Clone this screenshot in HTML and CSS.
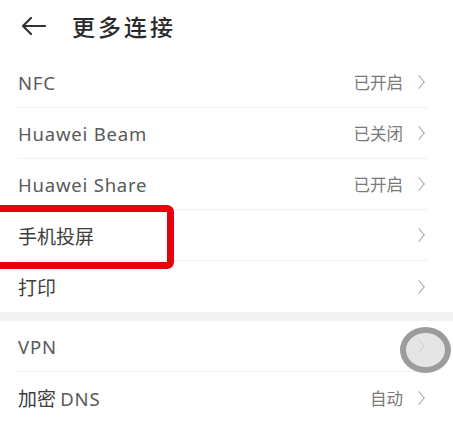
FILE: index.html
```html
<!DOCTYPE html>
<html lang="zh">
<head>
<meta charset="utf-8">
<link rel="stylesheet" href="styles.css">
</head>
<body>
<div class="page">
  <header class="header">
    <svg class="back" width="26" height="20" viewBox="0 0 26 20"><path d="M11 2 L3 10 L11 18 M3 10 H25" fill="none" stroke="#333" stroke-width="2.2" stroke-linecap="round" stroke-linejoin="round"/></svg>
    <h1 class="title">更多连接</h1>
  </header>
  <section class="group">
    <div class="row"><span class="label latin">NFC</span><span class="value">已开启</span><span class="chev"></span></div>
    <div class="row"><span class="label latin">Huawei Beam</span><span class="value">已关闭</span><span class="chev"></span></div>
    <div class="row"><span class="label latin">Huawei Share</span><span class="value">已开启</span><span class="chev"></span></div>
    <div class="row"><span class="label">手机投屏</span><span class="chev"></span></div>
    <div class="row"><span class="label">打印</span><span class="chev"></span></div>
  </section>
  <div class="band"></div>
  <section class="group">
    <div class="row"><span class="label latin">VPN</span><span class="chev"></span></div>
    <div class="row"><span class="label">加密 <span class="latin">DNS</span></span><span class="value">自动</span><span class="chev"></span></div>
  </section>
  <div class="highlight"></div>
  <div class="tap"></div>
</div>
</body>
</html>
```
FILE: styles.css
```css
html, body {
  margin: 0;
  padding: 0;
  background: #fff;
}
.page {
  position: relative;
  width: 453px;
  height: 431px;
  overflow: hidden;
  font-family: "Noto Sans", "Noto Sans CJK SC", sans-serif;
}
.header {
  height: 57px;
  display: flex;
  align-items: center;
  padding-left: 20px;
  box-sizing: border-box;
  padding-bottom: 5px;
}
.back {
  display: block;
  margin-right: 26px;
}
.title {
  margin: 0;
  font-family: "Noto Sans CJK SC", sans-serif;
  font-size: 23px;
  font-weight: 500;
  letter-spacing: 3px;
  color: #2a2a2a;
}
.group {
  display: flex;
  flex-direction: column;
}
.row {
  height: 51px;
  display: flex;
  align-items: center;
  margin: 0 26px 0 18px;
  border-bottom: 1px solid #f1f1f1;
  box-sizing: border-box;
}
.group .row:last-child {
  border-bottom: none;
}
.label {
  flex: 1;
  font-family: "Noto Sans CJK SC", sans-serif;
  font-size: 19px;
  color: #3e3e3e;
}
.label.latin, .latin {
  font-family: "Noto Sans", "Noto Sans CJK SC", sans-serif;
  font-size: 18.5px;
  color: #5a5a5a;
  letter-spacing: 0.8px;
}
.value {
  font-family: "Noto Sans CJK SC", sans-serif;
  font-size: 16.5px;
  color: #7a7a7a;
  margin-right: 11px;
}
.chev {
  width: 9px;
  height: 9px;
  border-top: 1.4px solid #a0a0a0;
  border-right: 1.4px solid #a0a0a0;
  transform: scaleX(0.8) rotate(45deg);
  margin-right: 3px;
}
.band {
  height: 9px;
  background: #f2f2f2;
}
.highlight {
  position: absolute;
  left: -12px;
  top: 205px;
  width: 186px;
  height: 64px;
  box-sizing: border-box;
  border: 7px solid #e8000b;
  border-radius: 7px;
}
.tap {
  position: absolute;
  left: 400px;
  top: 327px;
  width: 51px;
  height: 46px;
  box-sizing: border-box;
  border: 6px solid #9c9c9c;
  border-radius: 50%;
  background: rgba(220, 220, 220, 0.75);
}
```
